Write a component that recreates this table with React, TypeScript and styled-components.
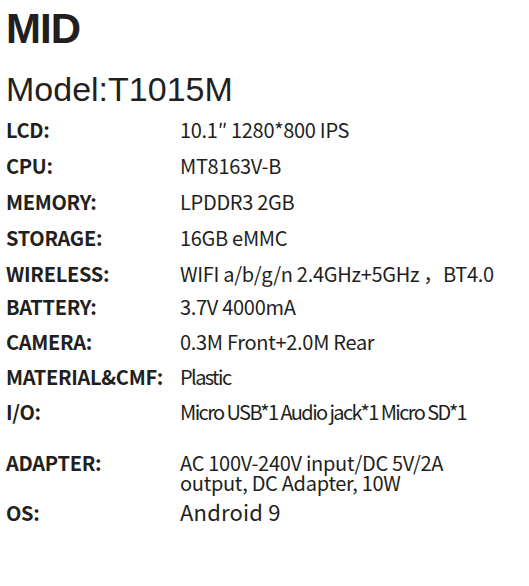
import styled, { createGlobalStyle } from 'styled-components'

const GlobalStyle = createGlobalStyle`
    html, body {
        margin: 0;
        padding: 0;
        background: #ffffff;
    }
`

// space = gap above the row, tight = the sheet squeezes that row's value text
const specData = [
    { label: "LCD:", value: ["10.1″  1280*800 IPS"], space: 0 },
    { label: "CPU:", value: ["MT8163V-B"], space: 16 },
    { label: "MEMORY:", value: ["LPDDR3 2GB"], space: 16 },
    { label: "STORAGE:", value: ["16GB eMMC"], space: 16 },
    { label: "WIRELESS:", value: ["WIFI a/b/g/n 2.4GHz+5GHz ，BT4.0"], space: 16 },
    { label: "BATTERY:", value: ["3.7V 4000mA"], space: 13 },
    { label: "CAMERA:", value: ["0.3M Front+2.0M Rear"], space: 15 },
    { label: "MATERIAL&CMF:", value: ["Plastic"], space: 15, tight: true },
    { label: "I/O:", value: ["Micro USB*1 Audio jack*1 Micro SD*1"], space: 15, tight: true },
    { label: "ADAPTER:", value: ["AC 100V-240V input/DC 5V/2A", "output, DC Adapter, 10W"], space: 31 },
    { label: "OS:", value: ["Android 9"], space: 8, big: true },
]

const App = () => {
    return <Page>
        <GlobalStyle />
        <Title>MID</Title>
        <Model>Model:T1015M</Model>
        <SpecList>
            {specData.map(el => <SpecRow key={el.label} $space={el.space}>
                <Label>{el.label}</Label>
                <Value $tight={!!el.tight} $big={!!el.big}>
                    {el.value.map(line => <span key={line}>{line}</span>)}
                </Value>
            </SpecRow>
            )}
        </SpecList>
    </Page>
}

export default App

const Page = styled.div`
    width: 529px;
    min-height: 586px;
    box-sizing: border-box;
    padding: 8px 0 0 6px;
    color: #231f20;
    background: #ffffff;
`

const Title = styled.h1`
    margin: 0;
    font-family: "Liberation Sans", Arial, sans-serif;
    font-weight: 700;
    font-size: 42px;
    line-height: 42px;
    letter-spacing: -1px;
`

const Model = styled.div`
    margin-top: 22px;
    font-family: "Liberation Sans", Arial, sans-serif;
    font-size: 34px;
    line-height: 35px;
`

const SpecList = styled.div`
    display: flex;
    flex-direction: column;
    margin-top: 13px;
`

const SpecRow = styled.div<{ $space: number }>`
    display: grid;
    grid-template-columns: 174px 1fr;
    align-items: baseline;
    margin-top: ${p => p.$space}px;
`

const Label = styled.div`
    font-family: "Noto Sans CJK SC", "Noto Sans", sans-serif;
    font-weight: 700;
    font-size: 20px;
    line-height: 20px;
    letter-spacing: -0.3px;
`

const Value = styled.div<{ $tight: boolean; $big: boolean }>`
    display: flex;
    flex-direction: column;
    font-family: "Noto Sans CJK SC", "Noto Sans", sans-serif;
    font-weight: 400;
    font-size: ${p => p.$big ? '22px' : '20px'};
    line-height: 20px;
    letter-spacing: ${p => p.$tight ? '-1.6px' : p.$big ? '0.2px' : '-0.3px'};
`
